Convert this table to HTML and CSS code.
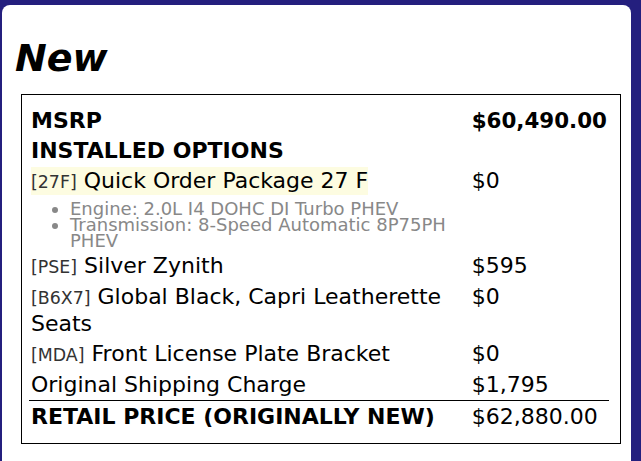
FILE: index.html
```html
<!DOCTYPE html>
<html>
<head>
<meta charset="utf-8">
<link rel="stylesheet" href="styles.css">
</head>
<body>
<div class="card">
  <h1 class="title">New</h1>
  <div class="box">
    <table class="price">
      <tr class="head">
        <td class="desc">MSRP</td>
        <td class="amt big">$60,490.00</td>
      </tr>
      <tr class="head">
        <td class="desc" colspan="2">INSTALLED OPTIONS</td>
      </tr>
      <tr>
        <td class="desc">
          <span class="hl"><span class="code">[27F]</span> Quick Order Package 27 F</span>
          <ul class="sub">
            <li>Engine: 2.0L I4 DOHC DI Turbo PHEV</li>
            <li>Transmission: 8-Speed Automatic 8P75PH PHEV</li>
          </ul>
        </td>
        <td class="amt">$0</td>
      </tr>
      <tr>
        <td class="desc"><span class="code">[PSE]</span> Silver Zynith</td>
        <td class="amt">$595</td>
      </tr>
      <tr>
        <td class="desc"><span class="code">[B6X7]</span> Global Black, Capri Leatherette Seats</td>
        <td class="amt">$0</td>
      </tr>
      <tr>
        <td class="desc"><span class="code">[MDA]</span> Front License Plate Bracket</td>
        <td class="amt">$0</td>
      </tr>
      <tr>
        <td class="desc">Original Shipping Charge</td>
        <td class="amt">$1,795</td>
      </tr>
      <tr class="total">
        <td class="desc">RETAIL PRICE (ORIGINALLY NEW)</td>
        <td class="amt">$62,880.00</td>
      </tr>
    </table>
  </div>
</div>
</body>
</html>
```

FILE: styles.css
```css
html, body {
  margin: 0;
  padding: 0;
  overflow: hidden;
  height: 100%;
}

body {
  background: #241f7e;
  font-family: "DejaVu Sans", sans-serif;
  color: #000;
}

.card {
  background: #fff;
  margin: 5px 10px 0 2px;
  padding: 31px 10px 18px 13px;
  border-radius: 8px 8px 0 0;
}

.title {
  margin: 0 0 14px 0;
  font-family: "DejaVu Sans", sans-serif;
  font-size: 38px;
  font-weight: bold;
  font-style: italic;
  line-height: normal;
}

.box {
  margin-left: 6px;
  border: 1px solid #000;
  padding: 11px 11px 11px 7px;
}

.price {
  width: 100%;
  border-collapse: collapse;
  border-spacing: 0;
  font-size: 22px;
  line-height: 26px;
}

.price td {
  padding: 2px 2px;
  vertical-align: top;
  text-align: left;
}

.price td.amt {
  padding-left: 5px;
  white-space: nowrap;
}

.price td.big {
  font-size: 21.4px;
}

.head td {
  font-weight: bold;
}

.hl {
  background: #fdfce1;
  padding: 1px 0 2px;
}

.code {
  font-size: 17.4px;
  color: #333;
}

.sub {
  margin: 6px 0 0 0;
  padding-left: 39px;
  font-size: 18px;
  line-height: 16px;
  color: #888;
}

.total td {
  border-top: 1px solid #000;
  padding-top: 3px;
}

.total td.desc {
  font-weight: bold;
}
```
